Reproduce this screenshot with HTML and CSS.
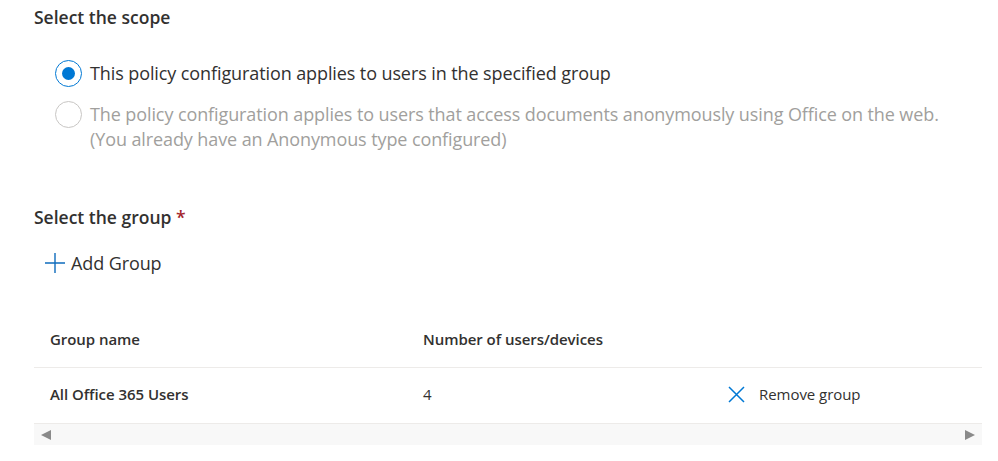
FILE: index.html
```html
<!DOCTYPE html>
<html lang="en">
<head>
<meta charset="utf-8">
<title>Policy scope</title>
<link rel="stylesheet" href="styles.css">
</head>
<body>
<div class="page">
  <h2 class="title">Select the scope</h2>
  <div class="radios">
    <div class="option">
      <span class="radio checked"></span>
      <span class="label">This policy configuration applies to users in the specified group</span>
    </div>
    <div class="option disabled">
      <span class="radio"></span>
      <span class="label">The policy configuration applies to users that access documents anonymously using Office on the web.<br>(You already have an Anonymous type configured)</span>
    </div>
  </div>

  <h2 class="title group-title">Select the group <span class="req">*</span></h2>
  <div class="add-btn">
    <svg class="plus" width="22" height="22" viewBox="0 0 22 22"><path d="M11 1V21M1 11H21" stroke="#0f6cbd" stroke-width="1.4" fill="none"/></svg>
    <span>Add Group</span>
  </div>

  <div class="table">
    <div class="row head">
      <div class="cell">Group name</div>
      <div class="cell">Number of users/devices</div>
      <div class="cell"></div>
    </div>
    <div class="row body">
      <div class="cell strong">All Office 365 Users</div>
      <div class="cell">4</div>
      <div class="cell action">
        <svg class="x" width="17" height="17" viewBox="0 0 17 17"><path d="M1 1L16 16M16 1L1 16" stroke="#0078d4" stroke-width="1.5" fill="none"/></svg>
        <span>Remove group</span>
      </div>
    </div>
    <div class="scrollbar">
      <span class="arrow left"></span>
      <span class="arrow right"></span>
    </div>
  </div>
</div>
</body>
</html>
```
FILE: styles.css
```css
html, body {
  margin: 0;
  padding: 0;
  background: #ffffff;
}
body {
  font-family: "Open Sans", "Noto Sans", sans-serif;
  color: #323130;
}
.page {
  padding: 5px 16px 0 34px;
}
.title {
  margin: 0;
  font-size: 17.5px;
  font-weight: 600;
  line-height: 24px;
}
.req {
  color: #a4262c;
}
.radios {
  margin-top: 31px;
  padding-left: 21px;
  display: flex;
  flex-direction: column;
  gap: 14px;
}
.option {
  display: flex;
  align-items: flex-start;
  gap: 8px;
}
.radio {
  flex: none;
  width: 27px;
  height: 27px;
  box-sizing: border-box;
  border-radius: 50%;
  border: 1px solid #c8c6c4;
  display: flex;
  align-items: center;
  justify-content: center;
  background: #fff;
}
.radio.checked {
  border: 1.5px solid #0078d4;
}
.radio.checked::after {
  content: "";
  width: 13px;
  height: 13px;
  border-radius: 50%;
  background: #0078d4;
}
.label {
  font-size: 18px;
  line-height: 25px;
  margin-top: 1px;
  letter-spacing: -0.1px;
}
.disabled .label {
  color: #a19f9d;
}
.group-title {
  margin-top: 53px;
}
.add-btn {
  margin-top: 22px;
  padding-left: 10px;
  display: flex;
  align-items: center;
  gap: 5px;
  font-size: 18px;
  line-height: 24px;
  letter-spacing: -0.1px;
}
.plus {
  display: block;
}
.table {
  margin-top: 36px;
}
.row {
  display: grid;
  grid-template-columns: 373px 305px 1fr;
  border-bottom: 1px solid #edebe9;
  align-items: center;
  font-size: 15px;
  letter-spacing: -0.05px;
  box-sizing: border-box;
}
.row.head {
  height: 57px;
  font-weight: 600;
  padding-bottom: 1px;
}
.row.body {
  height: 56px;
  padding-bottom: 3px;
}
.cell {
  padding-left: 16px;
  line-height: 20px;
}
.strong {
  font-weight: 600;
}
.action {
  display: flex;
  align-items: center;
  gap: 14px;
}
.x {
  display: block;
}
.scrollbar {
  height: 21px;
  background: #f8f8f8;
  display: flex;
  align-items: center;
  justify-content: space-between;
  padding: 0 7px;
}
.arrow {
  width: 0;
  height: 0;
  border-top: 5.5px solid transparent;
  border-bottom: 5.5px solid transparent;
}
.arrow.left {
  border-right: 10px solid #8a8a8a;
}
.arrow.right {
  border-left: 10px solid #8a8a8a;
}
```
